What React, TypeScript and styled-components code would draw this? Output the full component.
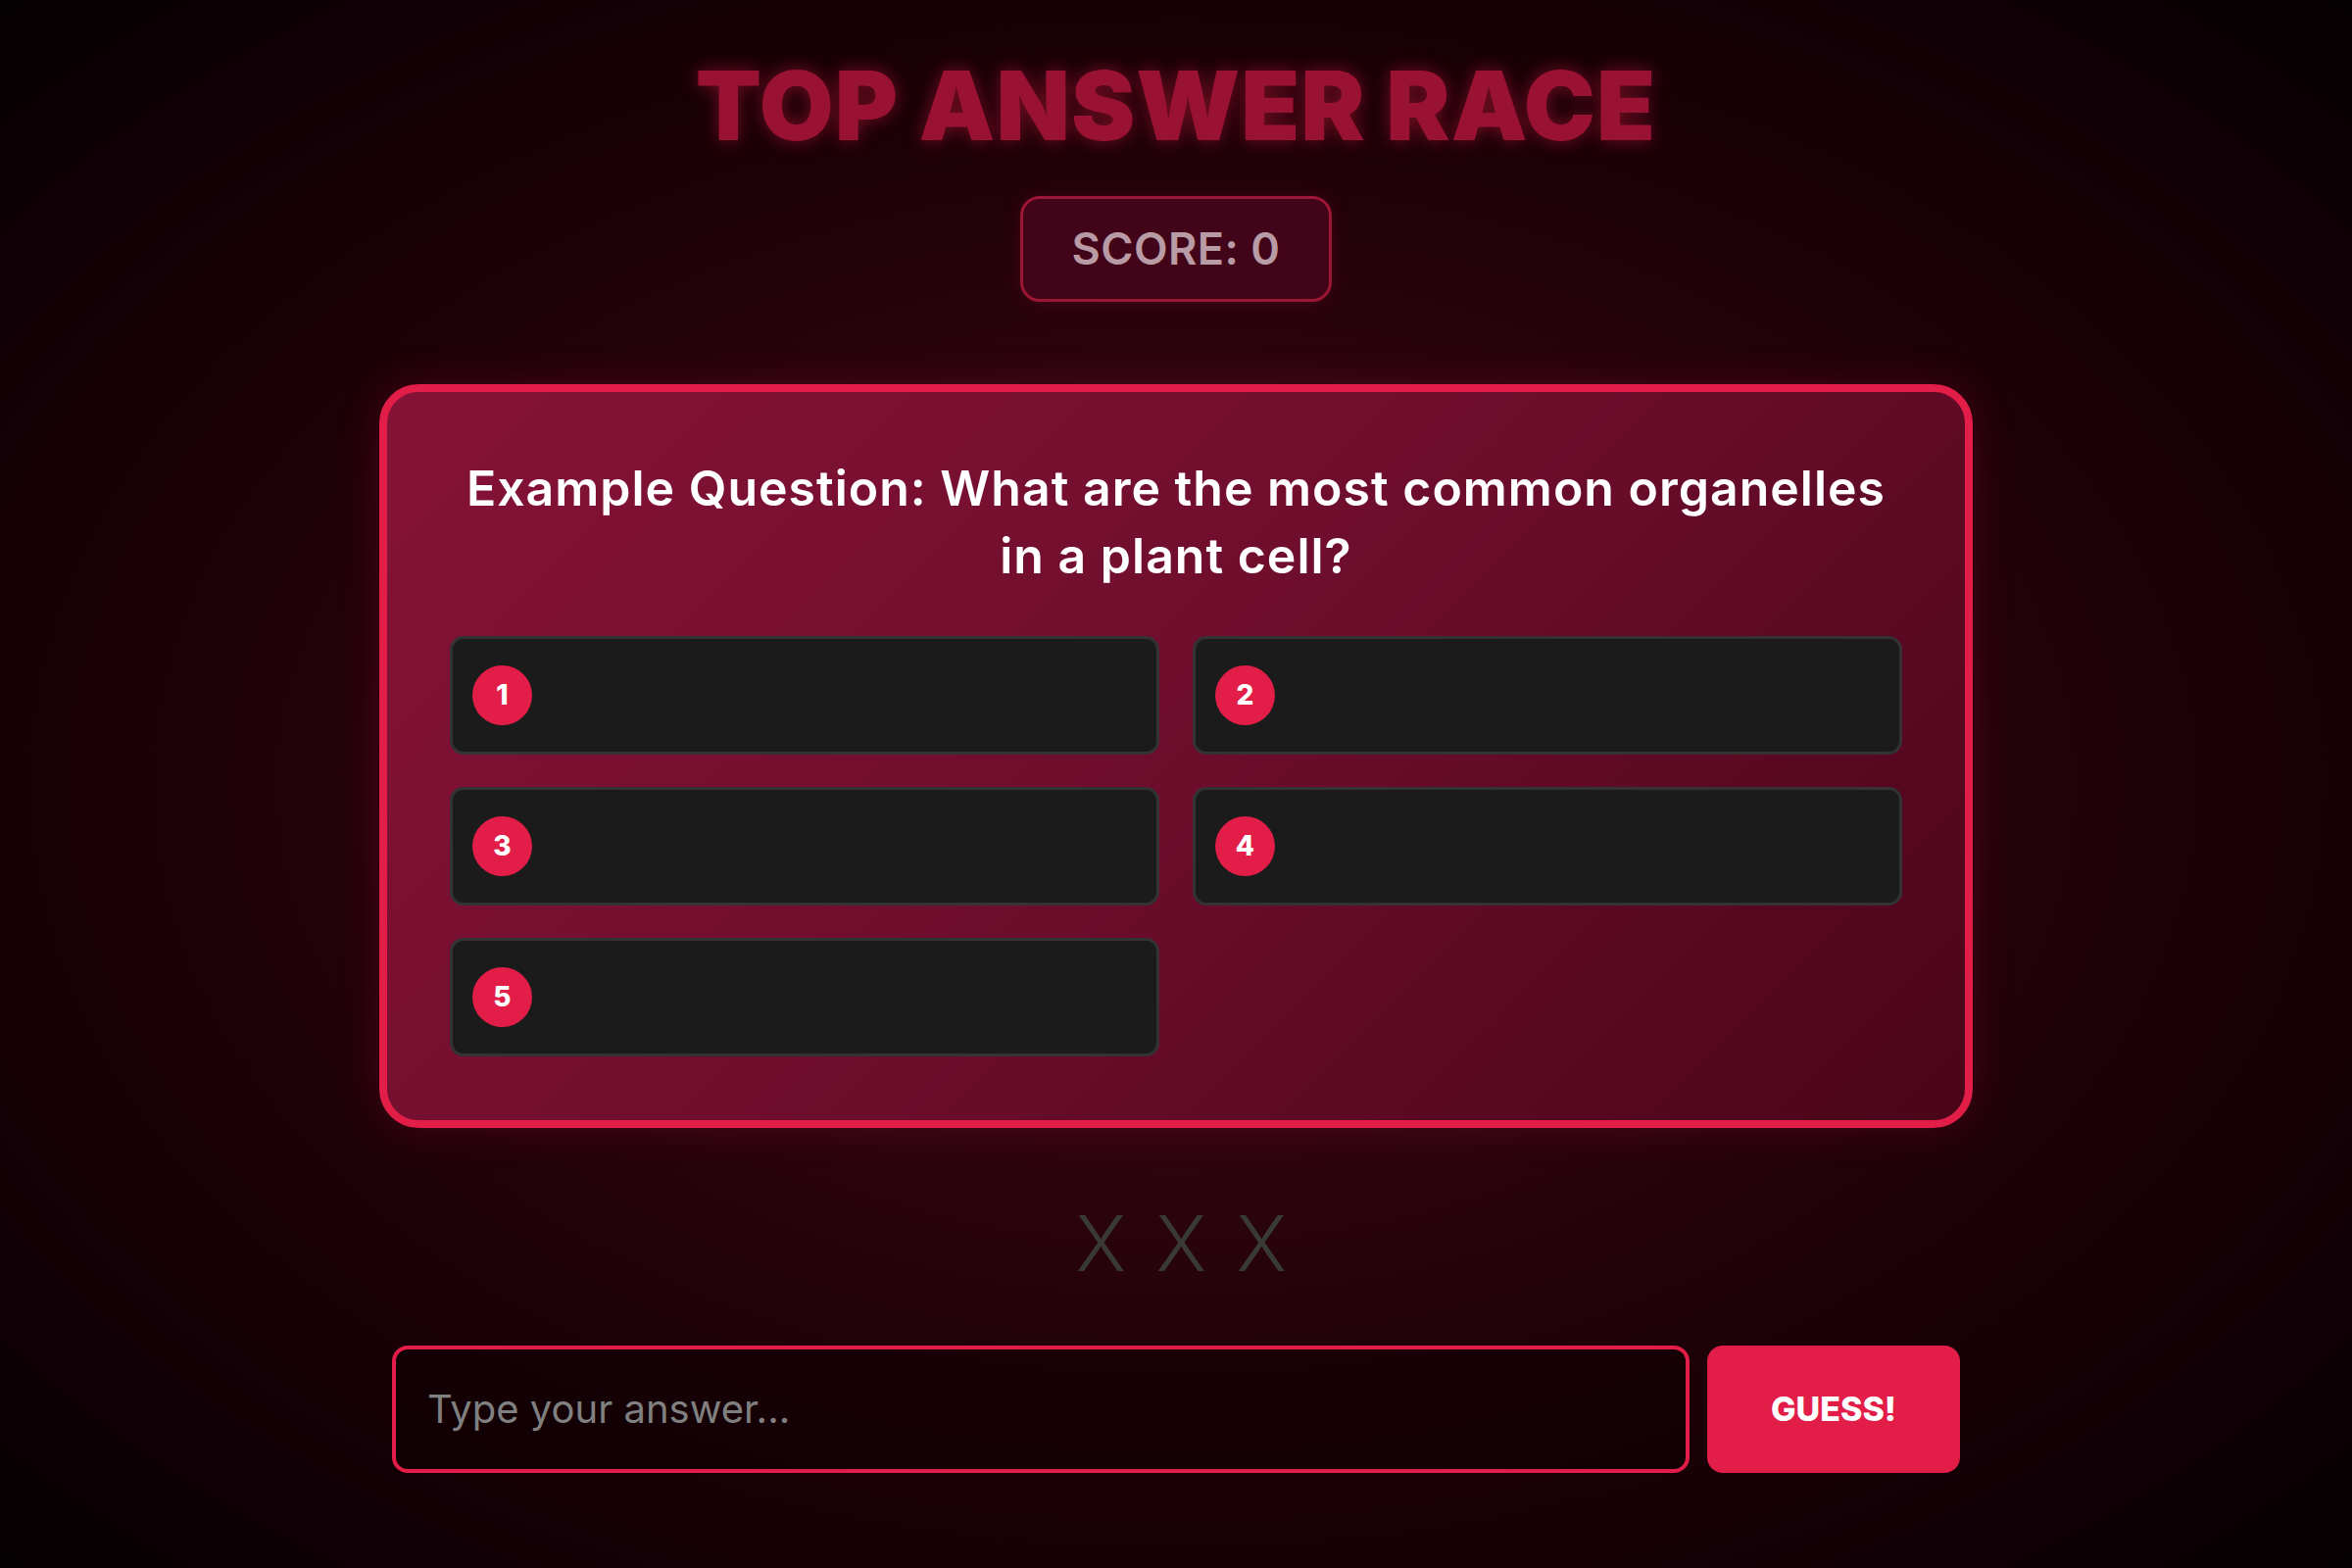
import React from "react";
import styled, { createGlobalStyle } from "styled-components";

const GlobalStyle = createGlobalStyle`
  html, body {
    margin: 0;
    padding: 0;
  }
  body {
    min-height: 100vh;
    font-family: Inter, "Open Sans", "Noto Sans", sans-serif;
    background: radial-gradient(ellipse farthest-corner at 50% 50%, #3c0717 0%, #2f0411 30%, #220209 52%, #170006 72%, #050002 100%);
    background-attachment: fixed;
    color: #fff;
  }
  * { box-sizing: border-box; }
`;

const Page = styled.main`
  min-height: 100vh;
  display: flex;
  flex-direction: column;
  align-items: center;
  padding-top: 49px;
`;

const Title = styled.h1`
  margin: 0;
  font-size: 98px;
  line-height: 1.2;
  font-weight: 900;
  letter-spacing: 1px;
  color: #9a1233;
  text-shadow: 0 0 18px rgba(225, 29, 72, 0.45);
  text-transform: uppercase;
`;

const ScoreBox = styled.div`
  margin-top: 33px;
  width: 318px;
  height: 108px;
  display: flex;
  align-items: center;
  justify-content: center;
  border: 3px solid #9b1535;
  border-radius: 20px;
  background: #420418;
  box-shadow: 0 0 20px rgba(225, 29, 72, 0.15);
  color: #b89ba4;
  font-size: 45px;
  font-weight: 600;
  letter-spacing: 0.5px;
`;

const Card = styled.section`
  margin-top: 84px;
  width: 1626px;
  border: 8px solid #e11d48;
  border-radius: 40px;
  padding: 64px 64px 65px;
  background: linear-gradient(135deg, #861337 0%, #6d0d2c 50%, #4a0519 100%);
  box-shadow: 0 0 40px rgba(225, 29, 72, 0.18);
  display: flex;
  flex-direction: column;
  align-items: center;
`;

const Question = styled.h2`
  margin: 0 0 47px;
  max-width: 1470px;
  text-align: center;
  font-size: 50px;
  line-height: 69px;
  font-weight: 600;
  letter-spacing: 1px;
  color: #ffffff;
`;

const AnswerGrid = styled.div`
  width: 100%;
  display: grid;
  grid-template-columns: 1fr 1fr;
  column-gap: 34px;
  row-gap: 33px;
`;

const AnswerSlot = styled.div`
  height: 121px;
  display: flex;
  align-items: center;
  padding: 0 20px;
  background: #1b1b1b;
  border: 3px solid #333333;
  border-radius: 14px;
`;

const Badge = styled.span`
  width: 61px;
  height: 61px;
  border-radius: 50%;
  background: #e11d48;
  color: #fff;
  display: flex;
  align-items: center;
  justify-content: center;
  font-size: 28px;
  font-weight: 800;
`;

const Strikes = styled.div`
  margin-top: 70px;
  display: flex;
  gap: 41px;
  justify-content: center;
`;

const Strike = styled.span<{ $active?: boolean }>`
  width: 41px;
  text-align: center;
  font-size: 78px;
  line-height: 96px;
  font-weight: 300;
  color: ${(p) => (p.$active ? "#e11d48" : "#393937")};
`;

const GuessForm = styled.form`
  margin-top: 56px;
  margin-bottom: 94px;
  width: 1600px;
  display: flex;
  gap: 18px;
`;

const AnswerInput = styled.input`
  flex: 1;
  height: 130px;
  border: 4px solid #e11d48;
  border-radius: 16px;
  background: rgba(10, 0, 3, 0.35);
  padding: 0 32px;
  font-family: inherit;
  font-size: 40px;
  color: #fff;
  outline: none;
  &::placeholder {
    color: #808080;
  }
`;

const GuessButton = styled.button`
  width: 258px;
  height: 130px;
  border: none;
  border-radius: 16px;
  background: #e11d48;
  color: #fff;
  font-family: inherit;
  font-size: 34px;
  font-weight: 800;
  cursor: pointer;
`;

export default function App() {
  const slots = [1, 2, 3, 4, 5];
  return (
    <>
      <GlobalStyle />
      <Page>
        <Title>Top Answer Race</Title>
        <ScoreBox>SCORE: 0</ScoreBox>
        <Card>
          <Question>
            Example Question: What are the most common organelles in a plant cell?
          </Question>
          <AnswerGrid>
            {slots.map((n) => (
              <AnswerSlot key={n}>
                <Badge>{n}</Badge>
              </AnswerSlot>
            ))}
          </AnswerGrid>
        </Card>
        <Strikes>
          <Strike>X</Strike>
          <Strike>X</Strike>
          <Strike>X</Strike>
        </Strikes>
        <GuessForm onSubmit={(e) => e.preventDefault()}>
          <AnswerInput type="text" placeholder="Type your answer..." />
          <GuessButton type="submit">GUESS!</GuessButton>
        </GuessForm>
      </Page>
    </>
  );
}
